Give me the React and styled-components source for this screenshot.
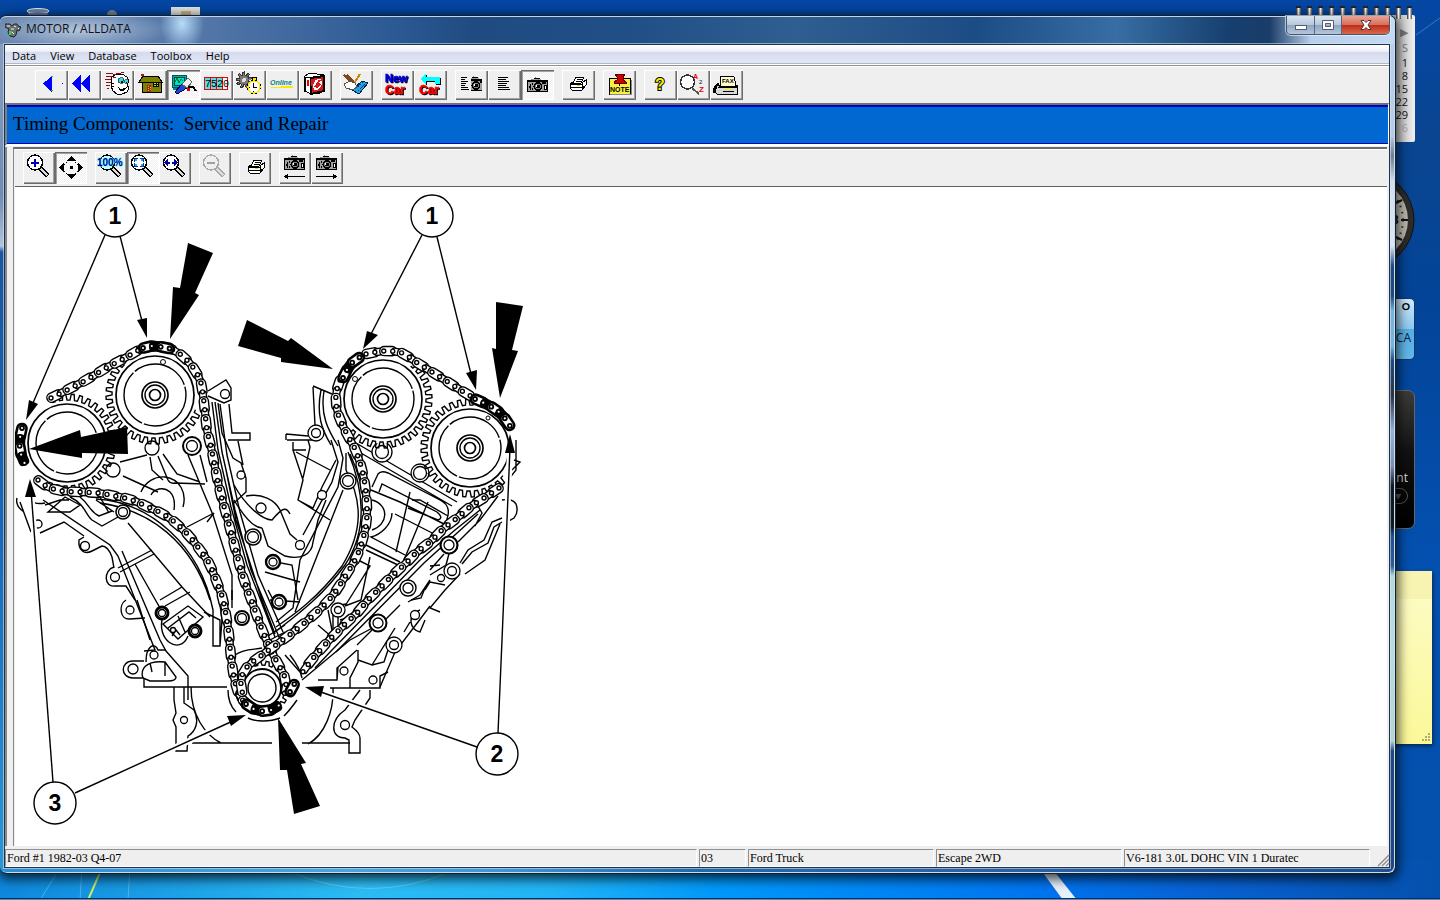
import React from "react"
import styled, { createGlobalStyle, css } from "styled-components"

const GlobalStyle = createGlobalStyle`
  * {
    box-sizing: border-box;
  }

  body {
    margin: 0;
    font-family: "Open Sans", "Liberation Sans", sans-serif;
  }
`

/* ---------- engine drawing helpers ---------- */

// Catmull-Rom through the points, then resampled at an even pitch
const samplePath = (pts, pitch) => {
  const dense = []
  for (let i = 0; i < pts.length - 1; i++) {
    const p0 = pts[Math.max(i - 1, 0)]
    const p1 = pts[i]
    const p2 = pts[i + 1]
    const p3 = pts[Math.min(i + 2, pts.length - 1)]
    for (let s = 0; s < 20; s++) {
      const t = s / 20
      dense.push(
        [0, 1].map(
          k =>
            0.5 *
            (2 * p1[k] +
              (p2[k] - p0[k]) * t +
              (2 * p0[k] - 5 * p1[k] + 4 * p2[k] - p3[k]) * t * t +
              (3 * p1[k] - p0[k] - 3 * p2[k] + p3[k]) * t * t * t)
        )
      )
    }
  }
  dense.push(pts[pts.length - 1])

  const out = [dense[0]]
  let left = pitch
  for (let i = 1; i < dense.length; i++) {
    let [x, y] = dense[i - 1]
    const [nx, ny] = dense[i]
    let d = Math.hypot(nx - x, ny - y)
    while (d >= left) {
      x += ((nx - x) * left) / d
      y += ((ny - y) * left) / d
      out.push([x, y])
      d -= left
      left = pitch
    }
    left -= d
  }
  return out
}

const Chain = ({ points, dark }) => {
  const pins = samplePath(points, 9)
  return (
    <g stroke="#000" fill="#fff">
      {pins.slice(1).map(([x, y], i) => {
        const [px, py] = pins[i]
        const angle = (Math.atan2(y - py, x - px) * 180) / Math.PI
        const outer = i % 2 === 0
        return (
          <rect
            key={i}
            x={outer ? -8.5 : -5}
            y={outer ? -4.6 : -3.4}
            width={outer ? 17 : 10}
            height={outer ? 9.2 : 6.8}
            rx={outer ? 4.4 : 2}
            fill={dark && !outer ? "#000" : "#fff"}
            strokeWidth={dark ? (outer ? 2.6 : 4) : 1.4}
            transform={`translate(${(x + px) / 2} ${(y + py) / 2}) rotate(${angle})`}
          />
        )
      })}
      {pins.map(([x, y], i) => (
        <circle key={i} cx={x} cy={y} r="2" strokeWidth={dark ? 1.8 : 1.4} />
      ))}
    </g>
  )
}

const gearPath = (cx, cy, inner, outer, teeth, from = 0, to = 360) => {
  const step = 360 / teeth
  const at = (r, deg) => {
    const a = (deg * Math.PI) / 180
    return `${(cx + r * Math.cos(a)).toFixed(1)},${(cy + r * Math.sin(a)).toFixed(1)}`
  }
  const pts = []
  for (let d = from; d < to; d += step) {
    pts.push(
      at(inner, d),
      at(inner, d + step * 0.4),
      at(outer, d + step * 0.5),
      at(outer, d + step * 0.85)
    )
  }
  return "M" + pts.join("L")
}

const Sprocket = ({ cx, cy, from, to, hub = true }) => (
  <g fill="none" stroke="#000" strokeWidth="1.4">
    <circle cx={cx} cy={cy} r="45" fill="#fff" stroke="none" />
    <path d={gearPath(cx, cy, 43, 49, 36, from, to)} />
    <circle cx={cx} cy={cy} r="39" strokeWidth="1.7" />
    <circle cx={cx} cy={cy} r="31" strokeDasharray="60 2" />
    {hub && <circle cx={cx} cy={cy} r="13" strokeWidth="1.7" />}
    {hub && <circle cx={cx} cy={cy} r="10" />}
    {hub && <circle cx={cx} cy={cy} r="5.5" strokeWidth="1.7" />}
  </g>
)

const Callout = ({ x, y, label }) => (
  <g>
    <circle cx={x} cy={y} r="21" fill="#fff" stroke="#000" strokeWidth="1.4" />
    <text
      x={x}
      y={y + 8}
      textAnchor="middle"
      fontFamily="Liberation Sans, sans-serif"
      fontWeight="700"
      fontSize="23"
    >
      {label}
    </text>
  </g>
)

const chains = [
  [[51, 398], [69, 389], [88, 379], [106, 368], [125, 358], [141, 349], [155, 346], [168, 348], [180, 354], [192, 366], [200, 380], [203, 395], [205, 412], [207, 430], [211, 447], [215, 467], [219, 487], [225, 510], [231, 532], [237, 555], [243, 577], [251, 599], [257, 616], [263, 632], [270, 648], [277, 662], [284, 675], [286, 686], [283, 698]],
  [[38, 480], [48, 487], [62, 491], [80, 492], [98, 493], [115, 496], [132, 500], [148, 507], [163, 514], [177, 524], [190, 537], [200, 550], [209, 563], [216, 580], [222, 596], [226, 615], [229, 635], [231, 657], [235, 682], [241, 698], [252, 708]],
  [[366, 354], [385, 351], [402, 353], [416, 362], [432, 372], [448, 382], [462, 391], [474, 398]],
  [[340, 380], [336, 394], [337, 410], [342, 424], [348, 436], [355, 449], [361, 466], [365, 485], [367, 508], [366, 525], [362, 542], [356, 558], [346, 575], [333, 595], [317, 612], [297, 629], [280, 642], [262, 655], [247, 667], [241, 680], [243, 696]],
  [[499, 488], [484, 498], [470, 507], [457, 518], [443, 529], [431, 541], [417, 552], [406, 563], [393, 575], [381, 587], [368, 600], [357, 613], [345, 624], [333, 636], [322, 648], [310, 662], [300, 676]],
]

const darkLinks = [
  [[143, 348], [152, 346], [162, 347], [172, 349]],
  [[22, 428], [20, 438], [20, 450], [24, 462], [29, 469]],
  [[343, 378], [348, 368], [354, 361], [362, 356]],
  [[475, 399], [484, 403], [495, 409], [503, 416], [510, 426]],
  [[246, 704], [256, 710], [267, 711], [277, 707], [284, 699]],
  [[290, 692], [296, 681]],
]

// castings, brackets and guide rails
const castingLines = [
  "M208 391L226 380L231 388V400L224 403L208 396M218 403L222 433L233 458L241 463L246 478V492L234 503M229 404L232 433H250V440H228M238 441L243 465",
  "M212 402L218 450L231 507L247 565L275 637M215 402L222 452L235 510L251 570L279 637M220 404L227 455L240 512L258 575L283 632M226 470L236 520L262 600L275 634",
  "M234 485C245 505 262 520 272 520C282 508 286 506 290 514M234 500C243 515 253 528 262 528M246 496C262 493 275 500 280 510L290 534L297 540M262 528L268 546L285 556C300 560 312 555 313 542L318 520L326 500",
  "M188 455L213 515L232 575V600M200 455L207 482M158 456L168 480Q170 484 175 483L205 484M163 454L177 474L200 482M120 462L147 455M123 476L158 492M150 457L152 470L163 480",
  "M141 492C145 482 155 476 165 477C180 479 187 493 183 507M151 495C154 489 163 486 170 492C175 497 175 503 174 510M187 527L214 513L207 522",
  "M17 498Q15 506 24 512M20 502L31 532M40 533L64 522L84 536M30 500Q35 505 45 503M45 505L60 500L69 500M48 512L65 497L80 505L70 512Z",
  "M70 497C85 504 85 514 92 520L102 526L118 517M80 497C90 505 90 512 99 516L112 511M100 497L109 513M114 512L96 500M43 500L110 545L118 556L155 650L144 651",
  "M84 537L79 540C78 550 84 555 92 551L102 546Q108 546 112 557L114 568M122 551L160 640L166 651L188 676V700M118 568L152 550M120 572L154 554",
  "M114 567C103 570 104 588 115 586H126L135 600M126 600C118 605 120 620 130 619L145 618M137 600L150 640M128 523L182 587L210 617M135 564L160 608M160 600L182 587M165 606L190 592",
  "M96 499C150 502 200 545 213 610V646H220V620L204 612M100 503C150 510 192 542 210 600M220 646L222 620C216 560 190 530 152 512M232 590V608",
  "M163 624L188 606L203 617L178 639ZM168 628L189 612L196 618M178 616L185 632M163 616C155 640 180 656 188 636M172 636L176 630L180 635",
  "M144 661H133C120 661 120 678 133 678H144M143 678C140 670 145 660 165 662L176 677Q176 681 168 681H150ZM150 663L152 672M165 662V676M146 662C146 645 155 642 158 650L166 650M144 678V687H227",
  "M174 687V700L176 713L173 720L176 727V744M184 687V703L194 710C200 722 195 732 188 736L187 751H176V744M191 687C191 715 205 735 221 743M192 743H272M302 743H350M333 688C334 710 325 735 308 744",
  "M302 680L350 640L378 625M318 680H337V668L357 650M330 688H380V676L388 672M337 680L338 667M358 650V662L350 678V688M358 660L372 665L395 628M360 690L345 710C330 720 330 738 345 738L349 740V753H360V738Q360 733 352 727L355 720L370 698V690",
  "M286 434L308 436M287 440H314M286 434V440M293 442V450H306M293 450L303 480L298 500L313 508L322 487L336 460M308 440L310 447L303 478M296 452L330 470M298 500L330 520",
  "M313 387L315 425M313 386L332 394M321 390C316 415 322 430 331 445M324 391C320 415 328 430 338 446M331 440L338 462L332 482L303 535M338 440L343 458L338 487L300 560L293 608L276 622M343 490L295 612",
  "M348 452C364 490 368 530 345 565C320 600 290 620 275 632M346 453V470C362 500 364 530 342 566C316 600 292 616 276 627M350 454C368 492 370 532 348 568",
  "M356 443L457 502M354 449L452 506M372 487L378 474Q381 470 388 473L440 500Q450 505 448 515L445 528M371 490L400 502L444 524M379 492L382 484L437 512Q444 518 438 520L408 508",
  "M410 492L396 552M428 502L404 560M412 500H420L448 516M372 500C390 505 388 525 372 530M392 513C392 525 380 535 371 537L405 555M395 514L438 536M366 545L400 562M366 550L398 565",
  "M480 510L455 530L420 560L332 650L315 668M478 514L456 534L424 563L336 652M478 506L482 513L475 526M498 496L480 520L458 542M450 550L446 565L430 575M430 566L440 565M444 554L430 570",
  "M502 518L492 522L484 540L468 550L460 563M502 522L494 527L488 543L472 552L462 564M460 574L445 590L430 608L440 612M445 585L430 582L425 590M408 602L420 595L430 580M400 605L380 625M372 630L357 645",
  "M425 588L421 598L411 600M420 610C406 615 410 630 420 632L425 620M430 606L418 622L395 652L380 687M404 632L410 622M400 640L388 650L384 662L372 665M370 557L361 600L345 606M358 560L370 566L345 606M318 625L333 638V606L346 604",
  "M502 500Q512 498 516 504Q519 512 514 518L507 522M516 440V470L508 480M514 460L520 462L512 470M328 610L334 640M338 612V632M340 620L347 618M265 560L292 565L298 600M265 572L300 582M270 600L300 602M268 590L276 605",
  "M228 690C228 702 232 708 236 712M248 718C256 722 270 722 280 718M297 700C290 710 286 714 284 716M290 655Q300 668 302 678M270 640L285 632M268 636L285 625M460 452",
  "M465 574L485 560L500 524M235 655C245 648 255 650 262 648M285 655L300 672",
]

// [cx, cy, outer, inner, weight]
const bolts = [
  [225, 394, 4.5, 0, 1.3], [241, 475, 4, 0, 1.3], [261, 508, 5, 0, 1.3], [192, 446, 9, 5.5, 2],
  [152, 448, 7, 0, 1.3], [113, 470, 7, 0, 1.3], [123, 512, 7, 4.5, 1.6], [38, 524, 4, 0, 1.3],
  [85, 546, 4.5, 0, 1.4], [115, 577, 4.5, 0, 1.3], [130, 610, 4, 0, 1.3], [162, 613, 6, 3.5, 3],
  [195, 631, 6, 3.5, 3], [253, 537, 8, 5.5, 1.6], [242, 618, 7, 4.5, 2], [273, 562, 7, 4, 2.4],
  [279, 602, 7, 4, 2.4], [133, 669, 5, 0, 1.3], [154, 655, 4, 0, 1.3], [184, 720, 3.5, 0, 1.3],
  [382, 452, 10, 6.5, 1.3], [420, 473, 9, 6.5, 1.3], [316, 433, 8, 4.5, 1.3], [348, 481, 8, 5.5, 1.4],
  [322, 495, 4.5, 0, 1.3], [300, 545, 4.5, 0, 1.3], [449, 545, 8.5, 5, 2.2], [408, 588, 8, 5, 1.4],
  [378, 623, 8.5, 5, 2], [452, 571, 8, 4.5, 1.3], [415, 615, 4.5, 0, 1.3], [394, 645, 8, 4.5, 1.3],
  [373, 680, 4, 0, 1.3], [344, 671, 4, 0, 1.3], [345, 725, 4.5, 0, 1.3], [338, 610, 7, 3.5, 1.3],
  [441, 578, 3.5, 0, 1.3], [173, 630, 2.5, 0, 1.3],
]

const solidArrows = [
  "188,243 213,253 195,293 199,295 170,339 173,287 180,288",
  "247,320 288,341 291,338 333,369 281,362 281,358 238,346",
  "496,302 523,306 512,350 518,351 500,398 492,348 496,349",
  "29,449 80,430 81,437 127,427 128,454 82,453 82,458",
  "278,718 306,763 301,764 320,806 294,814 287,770 280,770",
]

const leaders = [
  ["M105 235L30 410", "29,400 38,404 26,420"],
  ["M120 236L143 325", "137,320 147,318 147,338"],
  ["M422 235L369 338", "367,331 378,335 363,349"],
  ["M437 237L472 378", "466,373 477,370 476,390"],
  ["M498 733L502 640L510 448", "505,453 515,453 510,434"],
  ["M477 747L318 691", "324,686 321,697 305,687"],
  ["M53 782L31 490", "25,497 36,497 30,479"],
  ["M75 793L235 720", "227,716 231,726 246,715"],
]

const TimingDiagram = () => (
  <svg
    width="520"
    height="640"
    viewBox="15 187 520 640"
    role="img"
    aria-label="Timing components"
  >
    <g fill="none" stroke="#000" strokeWidth="1.4">
      {castingLines.map(d => (
        <path key={d} d={d} />
      ))}
    </g>
    {bolts.map(([cx, cy, r, inner, weight]) => (
      <g key={`${cx}-${cy}`} fill="#fff" stroke="#000" strokeWidth={weight}>
        <circle cx={cx} cy={cy} r={r} />
        {inner > 0 && <circle cx={cx} cy={cy} r={inner} strokeWidth="1.3" />}
      </g>
    ))}
    <Sprocket cx={67} cy={443} from={-110} to={130} hub={false} />
    <Sprocket cx={155} cy={395} from={20} to={230} />
    <Sprocket cx={383} cy={399} from={-50} to={140} />
    <Sprocket cx={470} cy={448} from={40} to={280} />
    <circle cx="163" cy="362" r="2.5" fill="#fff" stroke="#000" />
    <circle cx="355" cy="379" r="2.5" fill="#fff" stroke="#000" />
    <circle cx="488" cy="418" r="2" fill="#fff" stroke="#000" />
    <g fill="#fff" stroke="#000" strokeWidth="1.4">
      <circle cx="262" cy="688" r="32" stroke="none" />
      <path d={gearPath(262, 688, 23, 27, 20)} fill="none" />
      <circle cx="262" cy="688" r="19" strokeWidth="1.8" />
      <circle cx="262" cy="688" r="14" />
    </g>
    {chains.map((points, i) => (
      <Chain key={i} points={points} />
    ))}
    {darkLinks.map((points, i) => (
      <Chain key={i} points={points} dark />
    ))}
    {solidArrows.map(points => (
      <polygon key={points} points={points} />
    ))}
    {leaders.map(([line, head]) => (
      <g key={line}>
        <path d={line} fill="none" stroke="#fff" strokeWidth="6" />
        <path d={line} fill="none" stroke="#000" strokeWidth="1.4" />
        <polygon points={head} />
      </g>
    ))}
    <Callout x={115} y={216} label="1" />
    <Callout x={432} y={216} label="1" />
    <Callout x={497} y={754} label="2" />
    <Callout x={55} y={803} label="3" />
  </svg>
)

/* ---------- toolbar icons ---------- */

const sans = "Liberation Sans, sans-serif"

const Camera = ({ x = 0, y = 0 }) => (
  <g transform={`translate(${x} ${y})`}>
    <path d="M1 3H7L8 1H14L15 3H22V15H1Z" fill="#a0a0a0" />
    <path d="M1 3h21v2h-21zM1 14h21v1h-21zM1 3h1v12h-1zM21 3h1v12h-1zM8 1h6v1h-6z" />
    <path d="M4 7h1v6h-1zM6 6h1v2h-1zM6 11h1v2h-1zM3 9h1v2h-1z" />
    <path d="M9 0h1v1h-1zM5 2h2v1h-2z" fill="#888" />
    <circle cx="12" cy="9.500" r="4.500" />
    <circle cx="12" cy="9.500" r="3" fill="#888" />
    <circle cx="12" cy="9.500" r="2" />
    <path d="M16 5h4v2h-4zM18 8h3v5h-3z" />
    <path d="M19 9h1v3h-1zM10 8h1v2h-1z" fill="#fff" />
  </g>
)

const Printer = ({ x = 0, y = 0 }) => (
  <g transform={`translate(${x} ${y})`}>
    <path d="M0 8L3 6H13L16 4V9L12 14H2L0 12Z" fill="#fff" stroke="#000" />
    <path d="M3 7L6 1H14L11 7Z" fill="#fff" stroke="#000" />
    <path d="M7 3h5v1h-5zM6 5h5v1h-5zM1 8h11v1h-11zM1 11h11v1h-11zM12 7h1v6h-1zM13 10h2v1h-2z" />
    <path d="M7 9h3v1h-3z" fill="#e8d800" />
  </g>
)

const Lens = ({ color = "#000", glass = "#fff", children }) => (
  <g>
    <path d="M17 16L25 24" stroke={color} strokeWidth="5" />
    <path d="M18 17L24.500 23.500" stroke="#ddd" strokeWidth="1.500" />
    <circle cx="12" cy="10.500" r="7.500" fill={glass} stroke={color} strokeWidth="1.300" />
    {children}
  </g>
)

const TextLines = ({ x = 0, w = 12 }) => (
  <path
    d={`M${x} 7.500h${w - 2}M${x} 9.500h${w - 4}M${x} 11.500h${w - 1}M${x} 13.500h${w - 3}M${x} 15.500h${w - 4}M${x} 17.500h${w - 1}M${x} 19.500h${w}`}
    stroke="#000"
    fill="none"
  />
)

const Shadowed = styled.g`
  filter: drop-shadow(1px 1px 0 #000);
`

const icons = {
  back: (
    <g>
      <path d="M8 13.500L17 6V22Z" fill="#00f" />
      <path d="M16 6h2v1h-2zM16 20h2v1h-2z" fill="#0c4" />
      <path d="M27 13h1v1h-1z" fill="#00f" />
    </g>
  ),
  backAll: <path d="M4 13.500L13 5V22ZM13 13.500L22 5V22Z" fill="#00f" />,
  face: (
    <g>
      <path d="M10 8L14 5L21 4L26 7L28 11L26 15L28 18L26 22L21 24H16L12 21L10 16Z" fill="#fff" stroke="#000" />
      <path d="M5 3h7v1h-7zM5 6h6v1h-6zM4 9h6v1h-6zM5 12h5v1h-5zM5 15h4v1h-4zM12 4h3v1h-3zM15 3h5v1h-5zM12 7h3v1h-3zM20 2h3v1h-3zM6 18h2v1h-2z" fill="#8c1010" />
      <circle cx="20" cy="10.500" r="3" fill="#3dd" stroke="#000" strokeWidth="0.600" />
      <circle cx="25.500" cy="11.500" r="2" fill="#3dd" stroke="#000" strokeWidth="0.600" />
      <path d="M20 11h2v2h-2zM25 12h1v1h-1z" />
      <path d="M17 17L20 19L26 17L23 21L19 21Z" />
      <path d="M11 13h2v1h-2zM11 16h2v1h-2z" />
    </g>
  ),
  house: (
    <g>
      <path d="M8 11H27V22H8Z" fill="#808000" stroke="#000" />
      <path d="M5 12L9 6H24L28 12Z" fill="#808000" stroke="#000" />
      <path d="M13 15h4v7h-4z" fill="#a03010" />
      <path d="M14 16h1v1h-1zM16 17h1v1h-1zM14 18h1v1h-1zM16 19h1v1h-1zM14 20h1v1h-1z" fill="#f0a080" />
      <path d="M19 12h6v5h-6z" />
      <path d="M20 13h2v1h-2zM23 13h1v1h-1zM20 15h2v1h-2zM23 15h1v1h-1z" fill="#d8d820" />
      <path d="M7 4h3v2h-3z" fill="#a02020" />
    </g>
  ),
  scanner: (
    <g>
      <path d="M5 5H19V17H5Z" fill="#0aa" stroke="#055" />
      <path d="M7 7H17V15H7Z" fill="#0dd" stroke="#044" />
      <path d="M8 12L10 8L12 13L14 9L16 11" fill="none" stroke="#080" />
      <path d="M6 19H14" stroke="#088" strokeWidth="2" />
      <path d="M8 22L15 14L20 18L10 24Z" fill="#1748d8" stroke="#004" />
      <path d="M15 14L21 8L25 12L20 18Z" fill="#eee" stroke="#666" />
      <path d="M21 17L26 17L29 21" fill="none" stroke="#000" strokeWidth="2" />
      <path d="M20 18h3v3h-3z" fill="#d00" />
    </g>
  ),
  codes: (
    <g>
      <path d="M4 7H28V20H4Z" fill="#e00" />
      <path d="M5 8h5v11h-5zM11 8h5v11h-5zM17 8h5v11h-5z" fill="#4fe0e8" />
      <path d="M23 8h4v11h-4z" fill="#fff" />
      <text x="5" y="17" fontFamily="Liberation Mono, monospace" fontSize="10">7520</text>
    </g>
  ),
  gearClock: (
    <g>
      <path d={gearPath(11, 10, 5, 8, 9)} fill="#777" stroke="#333" />
      <circle cx="11" cy="10" r="2" fill="#ddd" />
      <path d="M19 7h4v3h-4z" fill="#ffe600" stroke="#000" />
      <circle cx="21" cy="17" r="7" fill="#000" />
      <circle cx="21" cy="17" r="6" fill="#fff" stroke="#ffe600" strokeWidth="1.500" />
      <path d="M20.500 13V17.500H24" stroke="#000" fill="none" />
      <path d="M16 17h1v1h-1zM20 21h1v1h-1z" />
    </g>
  ),
  online: (
    <g>
      <text x="4" y="15" fontFamily={sans} fontSize="7" fontStyle="italic" fontWeight="700" fill="#088080">Online</text>
      <path d="M5 17h12v1h-12zM15 16h12v2h-12z" fill="#ffe600" />
    </g>
  ),
  book: (
    <g>
      <path d="M5 7L10 3L25 5V21L19 24L5 21Z" fill="#fff" stroke="#000" />
      <path d="M11 8L25 6V21L12 24Z" fill="#d81818" stroke="#000" strokeWidth="2" />
      <path d="M6 7L11 8L12 24L6 21Z" fill="#fff" stroke="#000" />
      <ellipse cx="18.500" cy="14.500" rx="4" ry="6" fill="#fff" transform="rotate(25 18.500 14.500)" />
      <path d="M16 17L21 10M17 18L21 14" stroke="#d81818" strokeWidth="2" />
      <path d="M8 10h2v6h-2z" fill="#e00" />
    </g>
  ),
  writePad: (
    <g>
      <path d="M12 20L22 11L28 13L19 24Z" fill="#29a3e0" stroke="#024" />
      <path d="M15 19L23 12M18 21L25 14" stroke="#013a80" strokeDasharray="2 1" />
      <path d="M4 5L13 14M7 5L15 13" stroke="#804818" strokeWidth="1.500" />
      <path d="M20 4L13 15" stroke="#c80" strokeWidth="2" />
      <path d="M4 14L10 11L15 13L17 17L13 20L6 18Z" fill="#fff" stroke="#555" />
    </g>
  ),
  newCar: (
    <Shadowed fontFamily={sans} fontWeight="700" strokeWidth="0.500">
      <text x="4" y="12" fontSize="11" fill="#0000e8" stroke="#0000e8">New</text>
      <text x="4" y="24" fontSize="12" fill="#f00" stroke="#f00">Car</text>
    </Shadowed>
  ),
  backCar: (
    <Shadowed fontFamily={sans} fontWeight="700" strokeWidth="0.500">
      <path d="M6 9L12 3V7H26V14H21V11H12V15Z" fill="#0ff" />
      <text x="5" y="24" fontSize="12" fill="#f00" stroke="#f00">Car</text>
    </Shadowed>
  ),
  textCamera: (
    <g>
      <TextLines x={6} w={8} />
      <svg x="16" y="5" width="11" height="18" viewBox="0 0 11 18">
        <Camera x={-7} y={1} />
      </svg>
    </g>
  ),
  text: <TextLines x={10} w={12} />,
  camera: <Camera x={5} y={7} />,
  print: <Printer x={8} y={6} />,
  note: (
    <g>
      <path d="M6 8H27V24H6Z" fill="#f8f040" stroke="#000" />
      <path d="M7 25h22v-15h-1v14h-21z" fill="#888" />
      <text x="7" y="22" fontFamily={sans} fontWeight="700" fontSize="7">NOTE</text>
      <path d="M12 4H22L20 7V10L23 12V13H11V12L14 10V7Z" fill="#d00000" stroke="#600" />
      <path d="M16.500 13V16" stroke="#000" />
    </g>
  ),
  help: (
    <text x="11" y="20" fontFamily={sans} fontWeight="700" fontSize="16" fill="#f8f000" stroke="#000" strokeWidth="2" paintOrder="stroke">
      ?
    </text>
  ),
  lookup: (
    <g fontFamily={sans} fontWeight="700">
      <path d="M15 18L22 24" stroke="#555" strokeWidth="2" />
      <circle cx="10.500" cy="12" r="7" fill="#fff" stroke="#333" strokeWidth="1.500" />
      <text x="16" y="9" fontSize="7" fill="#e00">A</text>
      <text x="22" y="14" fontSize="6" fontWeight="400">2</text>
      <text x="22" y="22" fontSize="8" fill="#e00">Z</text>
    </g>
  ),
  fax: (
    <g>
      <path d="M5 22L7 15H27V24H7Z" fill="#d8d8d8" stroke="#000" />
      <path d="M11 6.500H24L26 16H10Z" fill="#fffbd0" stroke="#000" />
      <text x="12" y="13" fontFamily={sans} fontWeight="700" fontSize="6">FAX</text>
      <path d="M8 17h19v1h-19zM13 21h11v1h-11z" />
      <path d="M14 19h8v1h-8z" fill="#f8f000" />
      <path d="M4 23C4 17 6 14 9 14" fill="none" stroke="#000" strokeWidth="2" />
    </g>
  ),
  zoomIn: (
    <Lens>
      <path d="M8 10h8v2h-8zM11 7h2v8h-2z" fill="#0000a0" />
    </Lens>
  ),
  pan: (
    <g>
      <path d="M16 4L21 9H11ZM16 27L21 22H11ZM4 15.500L9 10.500V20.500ZM28 15.500L23 10.500V20.500Z" />
      <path d="M11 10h1v1h-1zM9 12h1v1h-1zM20 10h1v1h-1zM22 12h1v1h-1zM9 19h1v1h-1zM11 21h1v1h-1zM22 19h1v1h-1zM20 21h1v1h-1z" />
      <path d="M15 14h3v3h-3z" />
    </g>
  ),
  full: (
    <Lens glass="#bff">
      <text x="2" y="14" fontFamily={sans} fontWeight="700" fontSize="10" fill="#000090" stroke="#6ff" strokeWidth="1" paintOrder="stroke">
        100%
      </text>
    </Lens>
  ),
  fit: (
    <Lens>
      <path d="M7 6h4v1h-4zM7 6h1v4h-1zM13 6h4v1h-4zM16 6h1v4h-1zM7 14h4v1h-4zM7 11h1v4h-1zM13 14h4v1h-4zM16 11h1v4h-1z" fill="#0038a8" />
      <path d="M8 7h2v2h-2zM14 7h2v2h-2zM8 12h2v2h-2zM14 12h2v2h-2z" fill="#2aa8d8" />
    </Lens>
  ),
  width: (
    <Lens>
      <path d="M5 10.500L9 7V14ZM19 10.500L15 7V14Z" fill="#0000a0" />
      <path d="M8 10h3v2h-3zM13 10h3v2h-3z" fill="#0000a0" />
    </Lens>
  ),
  zoomOut: (
    <Lens color="#a8a8a8" glass="#efefef">
      <path d="M8 10h8v2h-8z" fill="#a0a0a0" />
    </Lens>
  ),
  printImage: <Printer x={9} y={7} />,
  prevImage: (
    <g>
      <Camera x={4} y={3} />
      <path d="M7 24h19v1h-19z" />
      <path d="M5 24.500L9 21.500V27.500Z" />
    </g>
  ),
  nextImage: (
    <g>
      <Camera x={4} y={3} />
      <path d="M5 24h19v1h-19z" />
      <path d="M26 24.500L22 21.500V27.500Z" />
    </g>
  ),
}

const mainTools = [
  [
    ["back", "Back"],
    ["backAll", "Back to start"],
    ["face", "Technician"],
    ["house", "Home"],
    ["scanner", "Diagnostics", true],
    ["codes", "Codes"],
    ["gearClock", "Labor times"],
    ["online", "Online"],
    ["book", "Bulletins"],
  ],
  [["writePad", "Estimate"]],
  [
    ["newCar", "New car"],
    ["backCar", "Previous car"],
  ],
  [
    ["textCamera", "Text and images"],
    ["text", "Text"],
    ["camera", "Images", true],
  ],
  [["print", "Print"]],
  [["note", "Note"]],
  [
    ["help", "Help"],
    ["lookup", "Lookup"],
    ["fax", "Fax"],
  ],
]

const imageTools = [
  [
    ["zoomIn", "Zoom in"],
    ["pan", "Pan", true],
  ],
  [
    ["full", "Full size"],
    ["fit", "Fit to window", true],
    ["width", "Fit width"],
  ],
  [["zoomOut", "Zoom out"]],
  [["printImage", "Print image"]],
  [
    ["prevImage", "Previous image"],
    ["nextImage", "Next image"],
  ],
]

const ToolGroups = ({ groups, size, height }) =>
  groups.map((group, i) => (
    <ToolGroup key={i}>
      {group.map(([icon, label, pressed]) => (
        <ToolButton
          key={icon}
          type="button"
          aria-label={label}
          aria-pressed={Boolean(pressed)}
          disabled={icon === "zoomOut"}
          $width={size}
          $height={height}
          $pressed={pressed}
        >
          <svg width={size} height={height} viewBox={`0 0 ${size} ${height}`}>
            {icons[icon]}
          </svg>
        </ToolButton>
      ))}
    </ToolGroup>
  ))

const TitleIcon = () => (
  <svg width="16" height="16" viewBox="0 0 16 16">
    <path d="M0 2H5L7 4L9 2H12L13 4L16 5L14 9L12 8L11 13L9 15L5 14L3 10L4 7L0 5Z" fill="#6a7070" stroke="#222" />
    <path d="M2 4H5M9 4L11 5M6 7H9M13 6L14 7M7 10L9 12" stroke="#f4f4f4" />
    <path d="M4 9H7L6 13H4Z" fill="#3dcc5a" />
  </svg>
)

const Wallpaper = () => (
  <WallpaperArt viewBox="0 0 1440 900" preserveAspectRatio="none" aria-hidden="true">
    <defs>
      <linearGradient id="floor" x1="0" x2="1" y1="0" y2="0">
        <stop offset="0" stopColor="#0e87dc" />
        <stop offset="0.25" stopColor="#2cbcf4" />
        <stop offset="0.38" stopColor="#22b4f6" />
        <stop offset="0.5" stopColor="#0098fa" />
        <stop offset="0.72" stopColor="#0074f0" />
        <stop offset="0.85" stopColor="#0860d0" />
        <stop offset="1" stopColor="#0450ac" />
      </linearGradient>
    </defs>
    <rect y="860" width="1440" height="40" fill="url(#floor)" />
    <path d="M60 868L40 900M82 868L80 900M130 868L128 900" stroke="#6cc8f4" opacity="0.6" />
    <path d="M102 868L88 900" stroke="#c8f060" strokeWidth="2" />
    <path d="M290 872Q370 905 450 872" stroke="#5ccdf8" fill="none" />
    <path d="M1038 866L1050 866L1077 900H1063Z" fill="#fff" opacity="0.9" />
    <path d="M1416 35L1440 18" stroke="#4f8fc4" opacity="0.7" />
  </WallpaperArt>
)

const rings = Array.from({ length: 11 }, (_, i) => i)

const App = () => (
  <Desktop>
    <GlobalStyle />
    <Wallpaper />
    <DesktopIcons viewBox="0 0 210 20" aria-hidden="true">
      <ellipse cx="38" cy="11" rx="11" ry="2.500" fill="#6d86a8" stroke="#dfe8f0" />
      <path d="M28 13L30 20H46L48 13" fill="#5a78a8" />
      <circle cx="112" cy="15" r="5" fill="#7a8490" />
      <path d="M171 7H200V20H171Z" fill="#e4e4e0" />
      <path d="M181 11H191V20H181Z" fill="#c8b888" />
    </DesktopIcons>

    <Calendar>
      <Rings>
        {rings.map(r => (
          <Ring key={r} />
        ))}
      </Rings>
      <Page>
        <Muted>▶</Muted>
        <Muted>S</Muted>
        <span>1</span>
        <span>8</span>
        <span>15</span>
        <span>22</span>
        <span>29</span>
        <Faint>6</Faint>
      </Page>
    </Calendar>
    <Clock width="98" height="98" viewBox="0 0 98 98" aria-hidden="true">
      <circle cx="49" cy="49" r="48" fill="#2c2c2b" stroke="#111" />
      <circle cx="49" cy="49" r="42" fill="#b8b6aa" />
      <circle cx="49" cy="49" r="37" fill="none" stroke="#222" strokeWidth="2" strokeDasharray="1.500 4.900" />
      <path d="M84 49H91M79 32L85 29M79 66L85 69" stroke="#111" strokeWidth="2" />
      <text x="75" y="53" fontSize="12" fontFamily={sans} fontWeight="700">3</text>
    </Clock>
    <Weather>
      <Degrees>1°</Degrees>
      <Place>CA</Place>
    </Weather>
    <Player>
      <span>nt</span>
      <PlayerButton type="button" aria-label="More">
        ▾
      </PlayerButton>
    </Player>
    <Sticky>
      <StickyTop />
      <svg width="12" height="12" viewBox="0 0 12 12" aria-hidden="true">
        <path d="M8 2h2M5 5h2M8 5h2M2 8h2M5 8h2M8 8h2" stroke="#b0ac70" strokeWidth="2" />
      </svg>
    </Sticky>

    <Window>
      <TitleBar>
        <TitleIcon />
        <Title>MOTOR / ALLDATA</Title>
        <Captions>
          <CaptionButton type="button" aria-label="Minimize" $width={28}>
            <svg width="14" height="14" viewBox="0 0 14 14">
              <rect x="1.500" y="7.500" width="11" height="4" fill="#fff" stroke="#555b70" />
            </svg>
          </CaptionButton>
          <CaptionButton type="button" aria-label="Maximize" $width={27}>
            <svg width="14" height="14" viewBox="0 0 14 14">
              <path d="M1.500 2.500H12.500V11.500H1.500ZM4.500 5.500V8.500H9.500V5.500Z" fill="#fff" fillRule="evenodd" stroke="#555b70" />
            </svg>
          </CaptionButton>
          <CaptionButton type="button" aria-label="Close" $width={47} $close>
            <svg width="14" height="14" viewBox="0 0 14 14">
              <path d="M2 2.500H5L7 4.500L9 2.500H12L9 7L12 11.500H9L7 9.500L5 11.500H2L5 7Z" fill="#fff" stroke="#55303a" />
            </svg>
          </CaptionButton>
        </Captions>
      </TitleBar>

      <Client>
        <MenuBar aria-label="Main menu">
          {["Data", "View", "Database", "Toolbox", "Help"].map(item => (
            <MenuItem key={item} type="button">
              {item}
            </MenuItem>
          ))}
        </MenuBar>
        <MainToolbar>
          <ToolGroups groups={mainTools} size={33} height={30} />
        </MainToolbar>
        <Banner>
          <Heading>{"Timing Components:  Service and Repair"}</Heading>
        </Banner>
        <Workspace>
          <Viewer>
            <ImageToolbar>
              <ToolGroups groups={imageTools} size={32} height={32} />
            </ImageToolbar>
            <Picture>
              <TimingDiagram />
            </Picture>
          </Viewer>
        </Workspace>
        <StatusBar>
          <StatusCell>Ford #1 1982-03 Q4-07</StatusCell>
          <StatusCell>03</StatusCell>
          <StatusCell>Ford Truck</StatusCell>
          <StatusCell>Escape 2WD</StatusCell>
          <StatusCell>V6-181 3.0L DOHC VIN 1 Duratec</StatusCell>
          <Grip width="18" height="17" viewBox="0 0 18 17">
            <path d="M6 16L17 5M10 16L17 9M14 16L17 13" stroke="#909090" strokeWidth="1.500" />
          </Grip>
        </StatusBar>
      </Client>
    </Window>
    <Taskbar />
  </Desktop>
)

const Desktop = styled.main`
  background: linear-gradient(180deg, #0446a4 0, #0a4590 140px, #034498 300px, #0450b0 560px, #0450ac);
  display: flex;
  flex-direction: column;
  min-height: 100vh;
  overflow: hidden;
  padding: 15px 44px 26px 0;
  position: relative;
`

const WallpaperArt = styled.svg`
  height: 100%;
  inset: 0;
  position: absolute;
  width: 100%;
`

const DesktopIcons = styled.svg`
  height: 20px;
  left: 0;
  position: absolute;
  top: 0;
  width: 210px;
`

const Taskbar = styled.div`
  background: #4f8cc8;
  border-top: 1px solid #0a2c50;
  bottom: 0;
  height: 2px;
  left: 0;
  position: absolute;
  right: 0;
`

const gadget = css`
  position: absolute;
  right: 25px;
`

const Calendar = styled.section`
  ${gadget}
  top: 6px;
  width: 122px;
`

const Rings = styled.div`
  display: flex;
  justify-content: space-between;
  padding: 0 3px;
  position: relative;
  z-index: 1;
`

const Ring = styled.i`
  background: linear-gradient(90deg, #222, #fff 50%, #444);
  border-top: 2px solid #1c2430;
  height: 13px;
  width: 5px;
`

const Page = styled.div`
  align-items: flex-end;
  background: linear-gradient(90deg, #bbb 84%, #f0f0f0);
  border-radius: 2px;
  color: #111;
  display: flex;
  flex-direction: column;
  font-size: 11px;
  height: 127px;
  line-height: 13px;
  margin-top: -4px;
  padding: 9px 7px 0;
`

const Muted = styled.span`
  color: #777;
  height: 16px;
  line-height: 16px;
`

const Faint = styled.span`
  color: #aaa;
`

const Clock = styled.svg`
  ${gadget}
  top: 171px;
`

const Weather = styled.section`
  ${gadget}
  background: linear-gradient(180deg, #cfeafc 0, #8cc8ee 50%, #58aee4 50%, #62b8ea);
  border: 1px solid #123a60;
  border-radius: 5px;
  color: #062040;
  height: 62px;
  padding: 0 3px;
  text-align: right;
  top: 298px;
  width: 100px;
`

const Degrees = styled.div`
  color: #000;
  font-size: 24px;
  line-height: 24px;
`

const Place = styled.div`
  font-size: 12px;
  line-height: 30px;
`

const Player = styled.section`
  ${gadget}
  align-items: flex-end;
  background: linear-gradient(180deg, #3c3c3a, #111 45%, #000);
  border: 1px solid #666;
  border-radius: 7px;
  color: #ddd;
  display: flex;
  flex-direction: column;
  font-size: 12px;
  height: 139px;
  justify-content: flex-end;
  padding: 0 6px 24px;
  top: 390px;
  width: 100px;
`

const PlayerButton = styled.button`
  background: none;
  border: 1px solid #555;
  border-radius: 8px;
  color: #555;
  font-size: 12px;
  height: 16px;
  line-height: 12px;
  margin-top: 2px;
  padding: 0 6px;
`

const Sticky = styled.section`
  align-items: flex-end;
  background: linear-gradient(180deg, #fdfcc8, #fbf899);
  box-shadow: 1px 2px 4px rgba(0, 0, 0, 0.5);
  display: flex;
  flex-direction: column;
  height: 173px;
  justify-content: space-between;
  position: absolute;
  right: 8px;
  top: 571px;
  width: 140px;
`

const StickyTop = styled.div`
  background: #f6f4b0;
  height: 28px;
  width: 100%;
`

const Window = styled.section`
  background:
    linear-gradient(180deg, #bcd0ea 0, #b6cbe6 120px, #6e7c90 140px, #d4deea 165px, #dce6f0 230px, #1d4a80 250px, #1d4a80 280px, #74b4e0 295px, #74b4e0 330px, #1d4a80 345px, #2c3440 380px, #9ab2d4 415px, #7e90b0 450px, #101820 470px, #101820 510px, #1f5290 520px, #2a5c98 550px, #b8d8d6 560px, #bcdade 620px, #b8d4d0 725px, #1d4a84 735px)
      right top / 7px 100% no-repeat,
    linear-gradient(180deg, #8ca0c0 0, #6f8cb4 180px, #b4c4dc 230px, #1a57a0 236px, #1a68b4 60%, #2d96d4)
      left top / 5px 100% no-repeat,
    linear-gradient(90deg, #2f8cd0 0, #4aa4de 25%, #3f95d6 36%, #2268ac 50%, #2c62a4 70%, #1c508e) left bottom / 100% 7px
      no-repeat,
    #2a5a8c;
  border: 1px solid #10202e;
  border-left: 0;
  border-radius: 7px;
  box-shadow:
    inset 0 1px 0 #c4d4e6,
    inset -1px -1px 0 #c8dcec,
    0 3px 12px 2px rgba(0, 0, 0, 0.75);
  display: flex;
  flex: 1;
  flex-direction: column;
  padding: 0 5px 5px 4px;
  position: relative;
  z-index: 2;
`

const TitleBar = styled.header`
  align-items: center;
  background:
    radial-gradient(ellipse 90px 20px at 80px 14px, rgba(220, 232, 244, 0.65), transparent),
    radial-gradient(ellipse 22px 28px at 182px 8px, #b8dcf8, transparent),
    linear-gradient(90deg, #6c88b0 0, #5478a8 14%, #2c5a94 28%, #1f4b80 34%, #204f86 45%, #2f5e90 57%, #1c4c84 70%, #386ea4 80%, #16406f 88%, #1a3c68 91%, #b8d0ec 94%, #c4daf2);
  border-radius: 6px 6px 0 0;
  box-shadow: inset 0 1px 0 #c4d4e6;
  display: flex;
  height: 28px;
  margin: 0 -5px 0 -4px;
  padding-left: 5px;
`

const Title = styled.span`
  color: #111;
  flex: 1;
  font-size: 12px;
  line-height: 16px;
  padding: 0 0 2px 5px;
`

const Captions = styled.div`
  align-self: flex-start;
  border: 1px solid #45586e;
  border-radius: 0 0 5px 5px;
  border-top: 0;
  box-shadow: 0 0 0 1px rgba(240, 248, 255, 0.6);
  display: flex;
  margin-right: 5px;
  overflow: hidden;
`

const CaptionButton = styled.button`
  align-items: center;
  background: ${({ $close }) =>
    $close
      ? "linear-gradient(180deg, #e8a498 0, #d8705c 48%, #bc2c18 50%, #d8684c)"
      : "linear-gradient(180deg, #d8e4f0 0, #b8c8dc 48%, #8ca4c0 50%, #b4c8dc)"};
  border: 0;
  border-right: ${({ $close }) => ($close ? 0 : "1px solid #56687e")};
  display: flex;
  height: 18px;
  justify-content: center;
  padding: 0;
  width: ${({ $width }) => $width}px;
`

const Client = styled.div`
  background: #efefef;
  border: 1px solid #1c3450;
  box-shadow: 0 0 0 1px rgba(220, 234, 248, 0.55);
  display: flex;
  flex: 1;
  flex-direction: column;
`

const MenuBar = styled.nav`
  background: linear-gradient(180deg, #fff 0, #eef1f8 35%, #d5dbed 40%, #e2e7f5);
  border-bottom: 1px solid #b4b8c4;
  box-shadow: 0 1px 0 #fff;
  display: flex;
  height: 19px;
`

const MenuItem = styled.button`
  background: none;
  border: 0;
  color: #000;
  font-family: inherit;
  font-size: 11px;
  height: 19px;
  line-height: 16px;
  padding: 2px 7px 0;
`

const MainToolbar = styled.div`
  border-top: 1px solid #909090;
  box-shadow: inset 0 1px 0 #fff;
  display: flex;
  gap: 8px;
  margin-top: 1px;
  padding: 4px 0 3px 30px;
`

const ToolGroup = styled.div`
  display: flex;
`

const ToolButton = styled.button`
  background: #efefef;
  border: 0;
  box-shadow:
    inset 1px 1px 0 #fff,
    inset -1px -1px 0 #6c6c6c,
    inset -2px -2px 0 #a0a0a0;
  height: ${({ $height }) => $height}px;
  padding: 0;
  width: ${({ $width }) => $width}px;

  svg {
    display: block;
    shape-rendering: crispEdges;
  }

  ${({ $pressed }) =>
    $pressed &&
    css`
      background: repeating-conic-gradient(#fff 0 25%, #efefef 0 50%) 0 0 / 2px 2px;
      box-shadow:
        inset 1px 1px 0 #6c6c6c,
        inset 2px 2px 0 #a0a0a0,
        inset -1px -1px 0 #fff;
    `}
`

const Banner = styled.header`
  border: 2px solid;
  border-color: #707070 #fff #fff #808080;
  border-right-width: 1px;
`

const Heading = styled.h1`
  background: #0068d0;
  border-bottom: 1px solid #0000b8;
  border-top: 2px solid #0000c0;
  color: #000;
  font-family: "Liberation Serif", serif;
  font-size: 19px;
  font-weight: 400;
  line-height: 34px;
  margin: 0;
  padding: 0 0 2px 6px;
  white-space: pre;
`

const Workspace = styled.div`
  border-left: 2px solid #888;
  display: flex;
  flex: 1;
  margin-top: 1px;
  padding: 0 2px 0 6px;
`

const Viewer = styled.section`
  border-left: 1px solid #888;
  border-top: 2px solid #6c6c6c;
  display: flex;
  flex: 1;
  flex-direction: column;
  padding-left: 1px;
`

const ImageToolbar = styled.div`
  border-bottom: 1px solid #606060;
  box-shadow: inset 0 1px 0 #fff;
  display: flex;
  gap: 8px;
  padding: 3px 0 2px 8px;
`

const Picture = styled.div`
  background: #fff;
  flex: 1;

  svg {
    display: block;
  }
`

const StatusBar = styled.footer`
  display: grid;
  font-family: "Liberation Serif", serif;
  font-size: 12px;
  gap: 2px;
  grid-template-columns: 1fr 47px 186px 186px 246px 17px;
  padding-top: 3px;
`

const StatusCell = styled.span`
  border: 1px solid;
  border-color: #909090 #fff #fff #909090;
  line-height: 16px;
  padding-left: 1px;
`

const Grip = styled.svg`
  align-self: end;
`

export default App
